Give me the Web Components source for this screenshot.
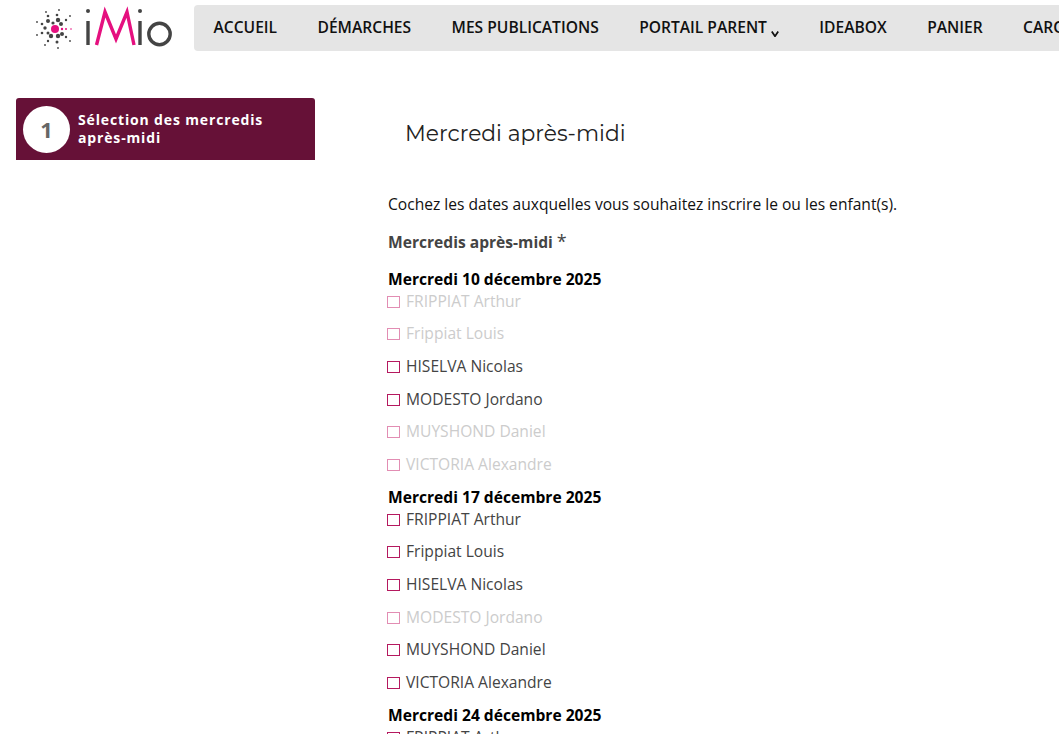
<!DOCTYPE html>
<html lang="fr"><head><meta charset="utf-8"><style>
html,body{margin:0;padding:0;background:#fff;height:734px;overflow:hidden}
body{font-family:"Open Sans",sans-serif;color:#000}
</style></head><body>
<template id="t-header"><style>
:host{display:flex;align-items:flex-start;height:51px;overflow:hidden}
.logo{width:194px;flex:none;height:51px;display:block}
nav{flex:1;height:46px;margin-top:5px;padding-bottom:2px;box-sizing:border-box;background:#e5e5e5;border-radius:4px 0 0 4px;display:flex;align-items:center;padding-left:19.5px;gap:40.4px;white-space:nowrap;overflow:hidden;font-size:15.6px;font-weight:600;color:#111}
</style><svg class="logo" width="194" height="51" viewBox="0 0 194 51">
<g fill="#444"><circle cx="48" cy="21" r="2"/><circle cx="58" cy="20" r="2.2"/><circle cx="61" cy="24" r="2"/><circle cx="45" cy="28" r="1.7"/><circle cx="62" cy="34" r="2"/><circle cx="51" cy="36" r="2.2"/><circle cx="58" cy="36" r="2.2"/><circle cx="48" cy="33" r="1.5"/><circle cx="53" cy="23" r="1.6"/><circle cx="48" cy="16" r="1.3"/><circle cx="57" cy="15" r="1.3"/><circle cx="66" cy="20" r="1.2"/><circle cx="42" cy="24" r="1.3"/><circle cx="42" cy="33" r="1.3"/><circle cx="48" cy="41" r="1.2"/><circle cx="57" cy="42" r="1.5"/><circle cx="66" cy="37" r="1.2"/><circle cx="59" cy="10" r=".9"/><circle cx="46" cy="12" r=".9"/><circle cx="70" cy="16" r=".9"/><circle cx="37" cy="22" r=".9"/><circle cx="37" cy="35" r=".9"/><circle cx="45" cy="45" r=".9"/><circle cx="58" cy="48" r=".9"/><circle cx="70" cy="41" r=".9"/></g>
<g fill="#e5107f"><circle cx="55" cy="29" r="4"/><circle cx="62" cy="29" r="1.2"/><circle cx="66" cy="29" r="1"/><circle cx="71" cy="29" r=".8"/></g>
<g fill="none" stroke-width="3.4"><path d="M88 21V45" stroke="#444"/><path d="M96.5 45L105 12L116 39L127 12L134 45" stroke="#e5107f"/><path d="M140 21V45" stroke="#444"/><circle cx="159.5" cy="34" r="10.7" stroke="#444"/></g>
<circle cx="88" cy="11" r="2" fill="#444"/><circle cx="140" cy="11" r="2" fill="#444"/></svg>
<nav><slot></slot></nav></template>

<template id="t-item"><style>:host{display:inline-flex;align-items:baseline;flex:none}
svg{display:none;margin-left:4px;position:relative;top:4px}
:host([caret]) svg{display:inline-block}</style><slot></slot><svg width="8" height="6" viewBox="0 0 8 6"><path d="M.8.6L4 5.2L7.2.6" fill="none" stroke="#111" stroke-width="1.8"/></svg></template>

<template id="t-step"><style>
:host{display:flex;flex:none;align-items:center;width:299px;height:62px;box-sizing:border-box;background:#661137;border-radius:3px 3px 0 0;padding:0 7px;gap:8px;color:#fff}
.n{width:47px;height:47px;flex:none;border-radius:50%;background:#fff;color:#666;font-size:22px;font-weight:700;display:flex;align-items:center;justify-content:center}
.t{font-size:14px;font-weight:700;line-height:18px;letter-spacing:.85px}
</style><div class="n"><slot name="n"></slot></div><div class="t"><slot></slot></div></template>

<template id="t-check"><style>
:host{display:flex;align-items:center;height:32.67px;color:#444;font-size:15.6px;line-height:22px}
:host([disabled]){color:#ccc}
i{display:block;width:11px;height:10px;flex:none;border:1px solid #b5195f;margin:2px 6px 0 -1px;background:#fff;box-sizing:content-box}
:host([disabled]) i{border-color:#e28db3}
</style><i></i><span><slot></slot></span></template>

<template id="t-day"><style>
:host{display:block;margin-bottom:5.5px}
h4{margin:0;font-size:15.6px;font-weight:700;line-height:22px;color:#000;height:22px}
.l{margin-top:-5.5px}
</style><h4><slot name="d"></slot></h4><div class="l"><slot></slot></div></template>

<template id="t-main"><style>
:host{display:block;width:671px;flex:none;margin-left:73px}
h2{font-size:21.8px;font-weight:400;font-family:Montserrat,Inter,"Open Sans",sans-serif;color:#222;margin:0 0 0 17px;line-height:30px;padding-top:20px}
p{margin:45px 0 0;font-size:15.6px;line-height:22px;color:#111}
.q{margin:14px 0 0;font-size:15.6px;font-weight:700;color:#444;line-height:24px}
.q b{font-weight:400;font-size:18px}
.days{margin-top:14px}
</style><h2>Mercredi après-midi</h2><p>Cochez les dates auxquelles vous souhaitez inscrire le ou les enfant(s).</p>
<div class="q">Mercredis après-midi <b>*</b></div><div class="days"><slot></slot></div></template>

<template id="t-layout"><style>:host{display:flex;align-items:flex-start;padding:47px 0 0 16px}</style><slot></slot></template>

<x-header><x-item>ACCUEIL</x-item><x-item>DÉMARCHES</x-item><x-item>MES PUBLICATIONS</x-item><x-item caret>PORTAIL PARENT</x-item><x-item>IDEABOX</x-item><x-item>PANIER</x-item><x-item>CARO</x-item></x-header>
<x-layout>
<x-step><span slot="n">1</span>Sélection des mercredis après-midi</x-step>
<x-main>
<x-day><span slot="d">Mercredi 10 décembre 2025</span>
<x-check disabled>FRIPPIAT Arthur</x-check><x-check disabled>Frippiat Louis</x-check><x-check>HISELVA Nicolas</x-check><x-check>MODESTO Jordano</x-check><x-check disabled>MUYSHOND Daniel</x-check><x-check disabled>VICTORIA Alexandre</x-check></x-day>
<x-day><span slot="d">Mercredi 17 décembre 2025</span>
<x-check>FRIPPIAT Arthur</x-check><x-check>Frippiat Louis</x-check><x-check>HISELVA Nicolas</x-check><x-check disabled>MODESTO Jordano</x-check><x-check>MUYSHOND Daniel</x-check><x-check>VICTORIA Alexandre</x-check></x-day>
<x-day><span slot="d">Mercredi 24 décembre 2025</span><x-check>FRIPPIAT Arthur</x-check></x-day>
</x-main></x-layout>
<script>
function def(n,t){customElements.define(n,class extends HTMLElement{constructor(){super();this.attachShadow({mode:'open'}).appendChild(document.getElementById(t).content.cloneNode(true))}})}
def('x-header','t-header');def('x-item','t-item');def('x-step','t-step');def('x-check','t-check');def('x-day','t-day');def('x-main','t-main');def('x-layout','t-layout');
</script></body></html>
